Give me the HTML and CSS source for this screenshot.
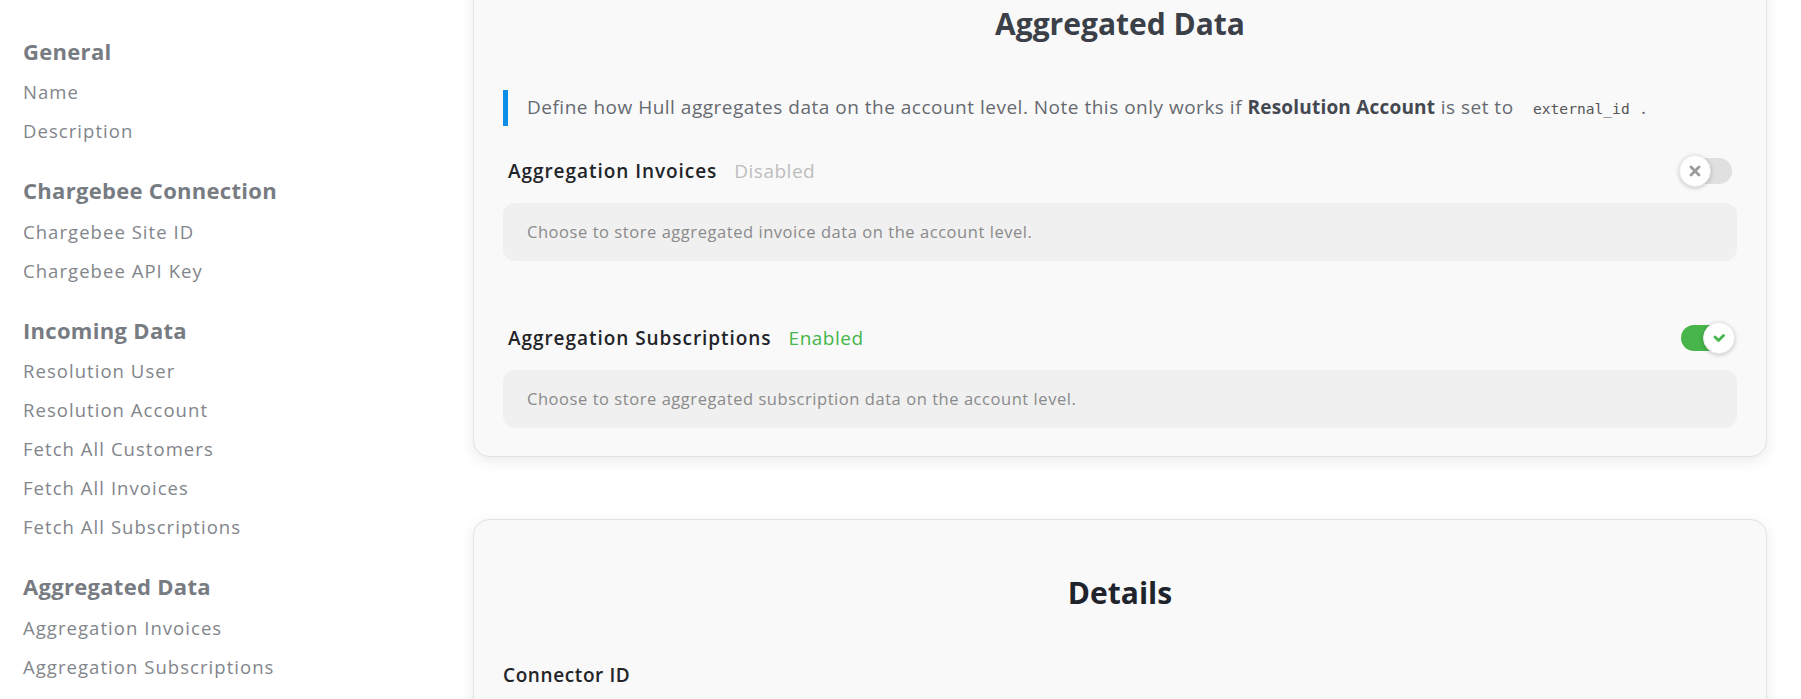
FILE: index.html
```html
<!DOCTYPE html>
<html lang="en">
<head>
<meta charset="utf-8">
<title>Chargebee Settings</title>
<link rel="stylesheet" href="styles.css">
</head>
<body>
<div class="page">
  <nav class="sidebar">
    <div class="nav-group">
      <div class="nav-heading">General</div>
      <div class="nav-item">Name</div>
      <div class="nav-item">Description</div>
    </div>
    <div class="nav-group">
      <div class="nav-heading">Chargebee Connection</div>
      <div class="nav-item">Chargebee Site ID</div>
      <div class="nav-item">Chargebee API Key</div>
    </div>
    <div class="nav-group">
      <div class="nav-heading">Incoming Data</div>
      <div class="nav-item">Resolution User</div>
      <div class="nav-item">Resolution Account</div>
      <div class="nav-item">Fetch All Customers</div>
      <div class="nav-item">Fetch All Invoices</div>
      <div class="nav-item">Fetch All Subscriptions</div>
    </div>
    <div class="nav-group">
      <div class="nav-heading">Aggregated Data</div>
      <div class="nav-item">Aggregation Invoices</div>
      <div class="nav-item">Aggregation Subscriptions</div>
    </div>
  </nav>
  <main class="content">
    <section class="card card-first">
      <h2 class="card-title title-muted">Aggregated Data</h2>
      <div class="callout">Define how Hull aggregates data on the account level. Note this only works if <strong>Resolution Account</strong> is set to <code class="code">external_id</code> .</div>

      <div class="setting">
        <div class="setting-row">
          <span class="setting-label">Aggregation Invoices</span>
          <span class="status status-off">Disabled</span>
          <span class="toggle toggle-off">
            <span class="track"></span>
            <span class="knob">
              <svg width="12" height="12" viewBox="0 0 12 12"><path d="M2 2 L10 10 M10 2 L2 10" stroke="#9b9b9b" stroke-width="2.8" stroke-linecap="round"/></svg>
            </span>
          </span>
        </div>
        <div class="help">Choose to store aggregated invoice data on the account level.</div>
      </div>

      <div class="setting setting-second">
        <div class="setting-row">
          <span class="setting-label">Aggregation Subscriptions</span>
          <span class="status status-on">Enabled</span>
          <span class="toggle toggle-on">
            <span class="track"></span>
            <span class="knob">
              <svg width="12" height="10" viewBox="0 0 12 10"><path d="M2 4 L5.5 7.5 L10.5 2.5" fill="none" stroke="#45b649" stroke-width="2.8" stroke-linecap="round" stroke-linejoin="round"/></svg>
            </span>
          </span>
        </div>
        <div class="help">Choose to store aggregated subscription data on the account level.</div>
      </div>
    </section>

    <section class="card card-second">
      <h2 class="card-title title-dark">Details</h2>
      <div class="field-label">Connector ID</div>
    </section>
  </main>
</div>
</body>
</html>
```

FILE: styles.css
```css
* { box-sizing: border-box; }

html, body {
  margin: 0;
  padding: 0;
  background: #ffffff;
  height: 699px;
  overflow: hidden;
}

body {
  font-family: "Open Sans", "Liberation Sans", sans-serif;
}

.page {
  display: flex;
  align-items: flex-start;
}

.sidebar {
  width: 473px;
  flex: none;
  padding: 35.5px 0 0 23px;
}

.nav-group {
  margin-bottom: 25px;
}

.nav-heading {
  font-size: 22px;
  font-weight: 700;
  line-height: 30px;
  color: #777b82;
  margin-bottom: 6.5px;
  letter-spacing: 0.3px;
}

.nav-item {
  font-size: 18.5px;
  line-height: 39px;
  color: #82858b;
  letter-spacing: 1.05px;
}

.content {
  width: 1294px;
  flex: none;
  margin-top: -50px;
}

.card {
  background: #f9f9f9;
  border: 1px solid #e2e2e2;
  border-radius: 16px;
  box-shadow: 0 4px 14px rgba(0, 0, 0, 0.08);
  padding: 30px 29px 28px 29px;
}

.card-second {
  margin-top: 62px;
  height: 400px;
}

.card-title {
  margin: 23px 0 0 0;
  text-align: center;
  font-size: 30px;
  line-height: 40px;
  font-weight: 700;
}

.title-muted { color: #3b4048; }
.title-dark { color: #1f232b; }

.callout {
  margin-top: 46px;
  border-left: 5px solid #0e8ee6;
  padding: 3px 0 3px 19px;
  font-size: 19px;
  line-height: 29px;
  color: #666a70;
  letter-spacing: 0.5px;
}

.callout strong {
  font-weight: 700;
  color: #444850;
  letter-spacing: 0.2px;
}

.code {
  font-family: "DejaVu Sans Mono", "Liberation Mono", monospace;
  font-size: 14.6px;
  letter-spacing: 0;
  color: #555;
  padding: 0 6px;
  margin-left: 8px;
}

.setting {
  margin-top: 25px;
}

.setting-second {
  margin-top: 57px;
}

.setting-row {
  display: flex;
  align-items: center;
  height: 40px;
  padding: 0 2px 0 5px;
  margin-bottom: 12px;
}

.setting-label {
  font-size: 19px;
  font-weight: 600;
  color: #222428;
  letter-spacing: 0.95px;
}

.status {
  font-size: 19px;
  margin-left: 17px;
  letter-spacing: 0.5px;
}

.status-off { color: #bdbdbd; }
.status-on { color: #45b649; }

.toggle {
  margin-left: auto;
  position: relative;
  width: 56px;
  height: 32px;
}

.track {
  position: absolute;
  top: 3px;
  height: 26px;
  border-radius: 13px;
}

.toggle-off .track {
  left: 10px;
  right: 3px;
  background: #e0e0e0;
}

.toggle-on .track {
  left: 2px;
  right: 6px;
  background: #48b54b;
}

.knob {
  position: absolute;
  top: 0;
  width: 32px;
  height: 32px;
  border-radius: 50%;
  background: #ffffff;
  border: 1px solid #ececec;
  box-shadow: 0 1px 4px rgba(0, 0, 0, 0.22);
  display: flex;
  align-items: center;
  justify-content: center;
}

.toggle-off .knob { left: 0; }
.toggle-on .knob { right: 0; }

.help {
  background: #f0f0f0;
  border-radius: 12px;
  padding: 17px 24px;
  font-size: 16.5px;
  line-height: 24px;
  color: #8a8a8a;
  letter-spacing: 0.55px;
}

.field-label {
  margin-top: 50px;
  font-size: 19px;
  font-weight: 600;
  line-height: 24px;
  color: #222428;
  letter-spacing: 0.6px;
}
```
